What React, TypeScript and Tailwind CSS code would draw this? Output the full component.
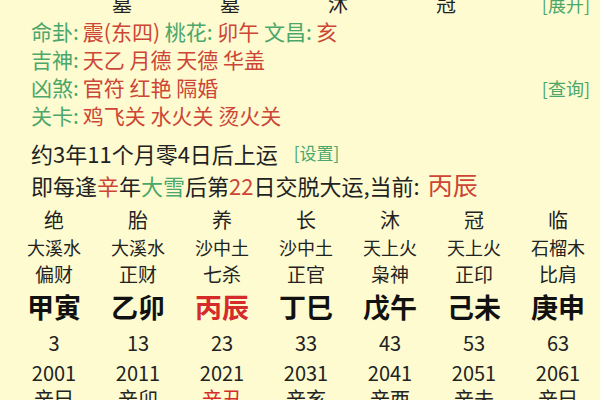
import React from 'react';

const green = 'text-[#4ba76b]';
const red = 'text-[#cc4536]';

const cols = [
  { zs: '绝', ny: '大溪水', ss: '偏财', gz: '甲寅', age: 3, year: 2001, ln: '辛巳' },
  { zs: '胎', ny: '大溪水', ss: '正财', gz: '乙卯', age: 13, year: 2011, ln: '辛卯' },
  { zs: '养', ny: '沙中土', ss: '七杀', gz: '丙辰', age: 23, year: 2021, ln: '辛丑', current: true },
  { zs: '长', ny: '沙中土', ss: '正官', gz: '丁巳', age: 33, year: 2031, ln: '辛亥' },
  { zs: '沐', ny: '天上火', ss: '枭神', gz: '戊午', age: 43, year: 2041, ln: '辛酉' },
  { zs: '冠', ny: '天上火', ss: '正印', gz: '己未', age: 53, year: 2051, ln: '辛未' },
  { zs: '临', ny: '石榴木', ss: '比肩', gz: '庚申', age: 63, year: 2061, ln: '辛巳' },
];

function Label({ name, items, link }: { name: string; items: React.ReactNode; link?: string }) {
  return (
    <div className="flex items-center h-[28px] pl-[31px] pr-[10px] text-[21px]">
      <span className={green}>{name}: </span>
      <span className="ml-[4px]">{items}</span>
      {link && <span className={`ml-auto text-[18px] ${green}`}>[{link}]</span>}
    </div>
  );
}

export default function App() {
  return (
    <div
      className="w-[600px] h-[400px] overflow-hidden bg-[#fdfbcf] text-[#222]"
      style={{ fontFamily: '"Noto Sans CJK SC", "Noto Sans", sans-serif' }}
    >
      <div className="flex items-center h-[28px] -mt-[10px] pl-[68px] pr-[10px] text-[20px]">
        {['墓', '墓', '沐', '冠'].map((c, i) => (
          <div key={i} className="w-[108px] text-center">{c}</div>
        ))}
        <span className={`ml-auto text-[18px] ${green}`}>[展开]</span>
      </div>

      <Label
        name="命卦"
        items={
          <>
            <span className={red}>震(东四)</span> <span className={green}>桃花:</span>{' '}
            <span className={red}>卯午</span> <span className={green}>文昌:</span>{' '}
            <span className={red}>亥</span>
          </>
        }
      />
      <Label name="吉神" items={<span className={red}>天乙 月德 天德 华盖</span>} />
      <Label name="凶煞" items={<span className={red}>官符 红艳 隔婚</span>} link="查询" />
      <Label name="关卡" items={<span className={red}>鸡飞关 水火关 烫火关</span>} />

      <div className="flex items-center h-[32px] mt-[7px] pl-[31px] text-[22px]">
        约3年11个月零4日后上运
        <span className={`ml-[16px] text-[17px] ${green}`}>[设置]</span>
      </div>
      <div className="flex items-center h-[32px] pl-[31px] text-[22px]">
        即每逢<span className={red}>辛</span>年<span className={green}>大雪</span>后第
        <span className={red}>22</span>日交脱大运,当前:
        <span className={`ml-[8px] text-[25px] ${red}`}>丙辰</span>
      </div>

      <div className="grid grid-cols-7 w-[588px] ml-[12px] mt-[5px] text-center">
        {cols.map((c, i) => (
          <div key={i} className="flex flex-col items-center">
            <div className="h-[28px] leading-[28px] text-[20px]">{c.zs}</div>
            <div className="h-[26px] leading-[26px] text-[18px]">{c.ny}</div>
            <div className="h-[28px] leading-[28px] text-[19px]">{c.ss}</div>
            <div
              className={`h-[38px] leading-[38px] text-[27px] font-bold ${c.current ? 'text-[#d62b2b]' : 'text-[#111]'}`}
            >
              {c.gz}
            </div>
            <div className="h-[34px] leading-[34px] text-[20px]">{c.age}</div>
            <div className="h-[26px] leading-[26px] text-[20px]">{c.year}</div>
            <div className={`h-[26px] leading-[26px] text-[20px] ${c.current ? 'text-[#d62b2b]' : ''}`}>
              {c.ln}
            </div>
          </div>
        ))}
      </div>
    </div>
  );
}
